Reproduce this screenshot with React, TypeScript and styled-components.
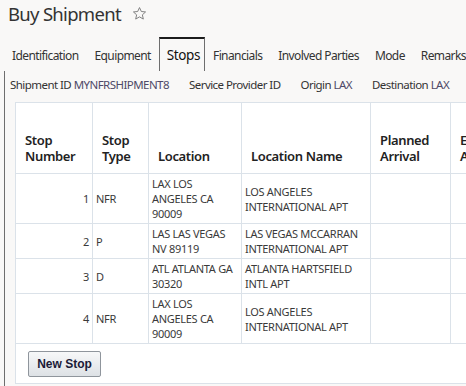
import React from 'react'
import styled, { createGlobalStyle } from 'styled-components'

const GlobalStyle = createGlobalStyle`
  html, body {
    margin: 0;
    padding: 0;
    background: #f9f8f7;
    overflow: hidden;
  }
  body {
    font-family: 'Noto Sans', 'Open Sans', sans-serif;
    color: #333;
  }
`

const Page = styled.div`
  width: 466px;
  height: 386px;
  overflow: hidden;
`

const Header = styled.div`
  height: 37px;
  display: flex;
  align-items: flex-start;
  gap: 11px;
  padding: 0 8px;
  box-sizing: border-box;
`

const Title = styled.h1`
  margin: 0;
  font-size: 18.5px;
  line-height: 28px;
  font-weight: 400;
  letter-spacing: -0.7px;
  color: #333;
`

const StarButton = styled.span`
  display: flex;
  align-items: center;
  height: 26px;
  color: #7a7a7a;
`

const TabStrip = styled.div`
  display: flex;
  height: 34px;
  padding-left: 4px;
  margin-bottom: -1px;
  position: relative;
  z-index: 1;
`

const Tab = styled.div<{ active?: boolean }>`
  box-sizing: border-box;
  height: 34px;
  padding: ${({ active }) => (active ? '6px 4px 0 7px' : '7px 7px 0')};
  border-top: 2px solid ${({ active }) => (active ? '#1c1c1c' : 'transparent')};
  border-left: 1px solid ${({ active }) => (active ? '#6e6e6e' : 'transparent')};
  border-right: 1px solid ${({ active }) => (active ? '#6e6e6e' : 'transparent')};
  background: #f9f8f7;
  font-size: ${({ active }) => (active ? '13.5px' : '12px')};
  line-height: 20px;
  letter-spacing: ${({ active }) => (active ? '-0.4px' : '-0.6px')};
  color: ${({ active }) => (active ? '#111' : '#333')};
  white-space: nowrap;
`

const Panel = styled.div`
  margin-left: 4px;
  border-top: 1px solid #6e6e6e;
  border-left: 1px solid #6e6e6e;
  height: 400px;
`

const InfoBar = styled.div`
  display: flex;
  gap: 20px;
  padding: 6px 5px 0;
  height: 15px;
  font-size: 11.5px;
  line-height: 16px;
  letter-spacing: -0.55px;
  white-space: nowrap;
`

const InfoLabel = styled.span`
  color: #333;
`

const InfoValue = styled.span`
  color: #4f4a68;
`

const Card = styled.div`
  margin: 10px 0 0 10px;
  display: inline-block;
  background: #fff;
  border: 1px solid #dbe2e9;
`

const Table = styled.table`
  border-collapse: separate;
  border-spacing: 0;
  table-layout: fixed;
  width: 635px;
`

const HeadCell = styled.th<{ w: number }>`
  box-sizing: border-box;
  width: ${({ w }) => w}px;
  height: 71px;
  padding: 0 6px 9px 9px;
  vertical-align: bottom;
  text-align: left;
  font-size: 13px;
  line-height: 16px;
  font-weight: 600;
  letter-spacing: -0.35px;
  color: #222;
  border-right: 1px solid #dbe2e9;
  border-bottom: 1px solid #dbe2e9;
`

const Cell = styled.td<{ align?: 'left' | 'right' }>`
  padding: 2px 3px;
  vertical-align: middle;
  text-align: ${({ align }) => align || 'left'};
  font-size: 11px;
  line-height: 15px;
  letter-spacing: -0.3px;
  color: #3a3a3a;
  white-space: nowrap;
  border-right: 1px solid #dbe2e9;
  border-bottom: 1px solid #dbe2e9;
`

const CardFooter = styled.div`
  padding: 7px 12px 6px;
`

const Button = styled.button`
  box-sizing: border-box;
  height: 26px;
  width: 73px;
  padding: 0;
  border: 1px solid #8f959c;
  border-radius: 2px;
  background: linear-gradient(#f7f8f9, #dde1e5);
  font-family: 'Liberation Sans', Arial, sans-serif;
  font-size: 12px;
  font-weight: 700;
  color: #1a1a38;
  cursor: pointer;
`

const Star = () => (
  <svg width="15" height="15" viewBox="0 0 24 24" fill="none" stroke="currentColor" strokeWidth="1.5" strokeLinejoin="round">
    <path d="M12 2.5l2.9 6.3 6.8.7-5.1 4.6 1.5 6.8L12 17.4l-6.1 3.5 1.5-6.8-5.1-4.6 6.8-.7z" />
  </svg>
)

const tabs = ['Identification', 'Equipment', 'Stops', 'Financials', 'Involved Parties', 'Mode', 'Remarks']

const info = [
  { label: 'Shipment ID', value: 'MYNFRSHIPMENT8' },
  { label: 'Service Provider ID', value: '' },
  { label: 'Origin', value: 'LAX' },
  { label: 'Destination', value: 'LAX' },
]

const columns = [
  { title: ['Stop', 'Number'], w: 77 },
  { title: ['Stop', 'Type'], w: 56 },
  { title: ['Location'], w: 93 },
  { title: ['Location Name'], w: 129 },
  { title: ['Planned', 'Arrival'], w: 80 },
  { title: ['Estimated', 'Arrival'], w: 100 },
  { title: ['Actual', 'Arrival'], w: 100 },
]

const stops = [
  { num: 1, type: 'NFR', location: ['LAX LOS', 'ANGELES CA', '90009'], name: ['LOS ANGELES', 'INTERNATIONAL APT'] },
  { num: 2, type: 'P', location: ['LAS LAS VEGAS', 'NV 89119'], name: ['LAS VEGAS MCCARRAN', 'INTERNATIONAL APT'] },
  { num: 3, type: 'D', location: ['ATL ATLANTA GA', '30320'], name: ['ATLANTA HARTSFIELD', 'INTL APT'] },
  { num: 4, type: 'NFR', location: ['LAX LOS', 'ANGELES CA', '90009'], name: ['LOS ANGELES', 'INTERNATIONAL APT'] },
]

const Lines = ({ lines }: { lines: string[] }) => (
  <>
    {lines.map((l, i) => (
      <React.Fragment key={i}>
        {i > 0 && <br />}
        {l}
      </React.Fragment>
    ))}
  </>
)

export default function App() {
  return (
    <Page>
      <GlobalStyle />
      <Header>
        <Title>Buy Shipment</Title>
        <StarButton>
          <Star />
        </StarButton>
      </Header>
      <TabStrip>
        {tabs.map((t) => (
          <Tab key={t} active={t === 'Stops'}>
            {t}
          </Tab>
        ))}
      </TabStrip>
      <Panel>
        <InfoBar>
          {info.map((item) => (
            <span key={item.label}>
              <InfoLabel>{item.label}</InfoLabel>
              {item.value && <InfoValue> {item.value}</InfoValue>}
            </span>
          ))}
        </InfoBar>
        <Card>
          <Table>
            <thead>
              <tr>
                {columns.map((c) => (
                  <HeadCell key={c.title.join(' ')} w={c.w}>
                    <Lines lines={c.title} />
                  </HeadCell>
                ))}
              </tr>
            </thead>
            <tbody>
              {stops.map((s) => (
                <tr key={s.num}>
                  <Cell align="right">{s.num}</Cell>
                  <Cell>{s.type}</Cell>
                  <Cell>
                    <Lines lines={s.location} />
                  </Cell>
                  <Cell>
                    <Lines lines={s.name} />
                  </Cell>
                  <Cell />
                  <Cell />
                  <Cell />
                </tr>
              ))}
            </tbody>
          </Table>
          <CardFooter>
            <Button>New Stop</Button>
          </CardFooter>
        </Card>
      </Panel>
    </Page>
  )
}
